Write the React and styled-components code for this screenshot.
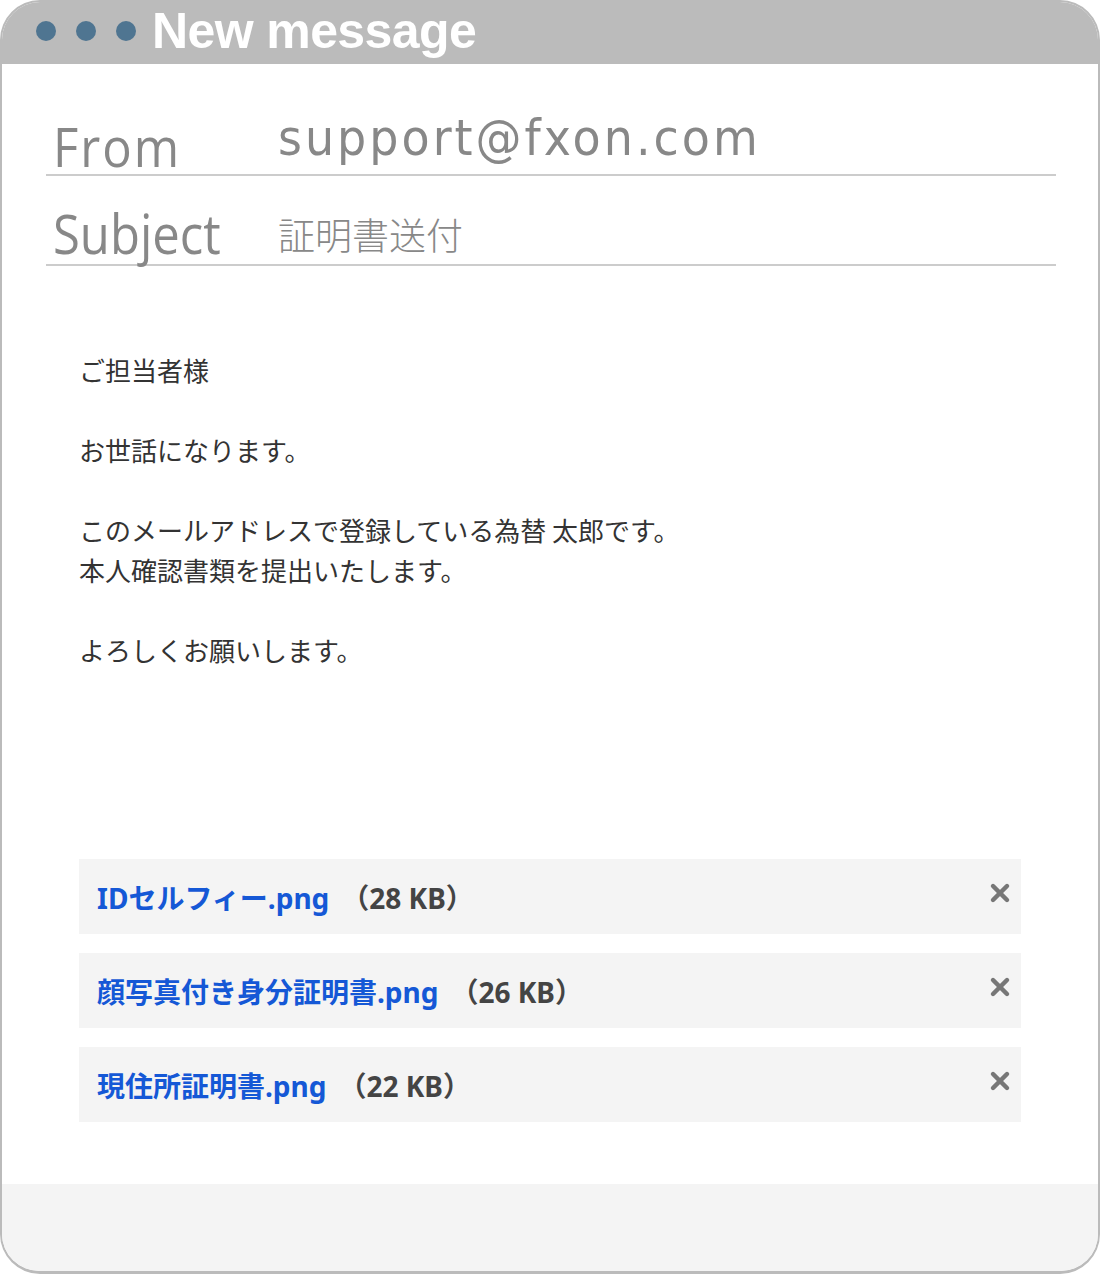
import React from "react";
import styled, { createGlobalStyle } from "styled-components";
import { X } from "lucide-react";

//global
const GlobalStyle = createGlobalStyle`
  html, body {
    margin: 0;
    padding: 0;
    background: #ffffff;
  }
  * {
    box-sizing: border-box;
  }
`;

//css section
const Window = styled.div`
  width: 1100px;
  height: 1274px;
  border: 2px solid #bbbbbb;
  border-bottom-width: 3px;
  border-radius: 40px;
  overflow: hidden;
  display: flex;
  flex-direction: column;
  background: #ffffff;
  font-family: "Noto Sans CJK JP", sans-serif;
`;

const TitleBar = styled.div`
  height: 62px;
  flex-shrink: 0;
  background: #bbbbbb;
  display: flex;
  align-items: center;
  padding: 0 0 4px 34px;
  gap: 20px;
`;

const Dot = styled.span`
  width: 20px;
  height: 20px;
  border-radius: 50%;
  background: #4f7591;
`;

const Title = styled.h1`
  margin: 0 0 0 -4px;
  font-family: "Liberation Sans", Arial, sans-serif;
  font-weight: 700;
  font-size: 50px;
  line-height: 50px;
  letter-spacing: -0.6px;
  color: #ffffff;
`;

const Header = styled.div`
  padding: 0 42px 0 44px;
`;

const FieldRow = styled.div`
  display: flex;
  align-items: flex-end;
  height: ${(p) => p.$height}px;
  border-bottom: 2px solid #cccccc;
`;

const Label = styled.div`
  width: 232px;
  flex-shrink: 0;
  padding-left: 7px;
  padding-bottom: ${(p) => p.$pb}px;
  font-family: "Open Sans", sans-serif;
  font-size: 49px;
  line-height: 49px;
  letter-spacing: ${(p) => p.$ls || 0}px;
  color: #888888;
  transform: scaleY(1.13);
  transform-origin: left bottom;
`;

const EmailValue = styled.div`
  padding-bottom: 10px;
  font-family: "DejaVu Sans", sans-serif;
  font-size: 46px;
  line-height: 46px;
  letter-spacing: 3px;
  color: #888888;
  transform: scaleY(1.1);
  transform-origin: left bottom;
`;

const SubjectValue = styled.div`
  padding-bottom: 10px;
  font-family: "Noto Sans CJK JP", sans-serif;
  font-size: 37px;
  line-height: 40px;
  color: #888888;
  font-weight: 300;
`;

const Body = styled.div`
  padding: 84px 0 0 77px;
  color: #333333;
  font-size: 26px;
  line-height: 40px;

  p {
    margin: 0 0 40px;
  }
`;

const Attachments = styled.div`
  margin: 149px 77px 0 77px;
  display: flex;
  flex-direction: column;
  gap: 19px;
`;

const Attachment = styled.div`
  height: 75px;
  background: #f4f4f4;
  display: flex;
  align-items: center;
  padding: 0 7px 0 18px;
`;

const FileName = styled.span`
  font-family: "Noto Sans", "Noto Sans CJK JP", sans-serif;
  font-weight: 700;
  font-size: 28px;
  color: #1558d6;
`;

const FileSize = styled.span`
  margin-left: 12px;
  font-family: "Noto Sans", "Noto Sans CJK JP", sans-serif;
  font-weight: 700;
  font-size: 28px;
  color: #444444;
`;

const Remove = styled.button`
  margin-left: auto;
  margin-top: -8px;
  width: 28px;
  height: 28px;
  padding: 0;
  border: none;
  background: none;
  color: #777777;
  display: flex;
  align-items: center;
  justify-content: center;
`;

const Footer = styled.div`
  margin-top: auto;
  height: 87px;
  flex-shrink: 0;
  background: #f4f4f4;
`;

const files = [
  { name: "IDセルフィー.png", size: "（28 KB）" },
  { name: "顔写真付き身分証明書.png", size: "（26 KB）" },
  { name: "現住所証明書.png", size: "（22 KB）" },
];

function App() {
  return (
    <>
      <GlobalStyle />
      <Window>
        <TitleBar>
          <Dot />
          <Dot />
          <Dot />
          <Title>New message</Title>
        </TitleBar>

        <Header>
          <FieldRow $height={112}>
            <Label $pb={-2} $ls={2}>From</Label>
            <EmailValue>support@fxon.com</EmailValue>
          </FieldRow>
          <FieldRow $height={90}>
            <Label $pb={3}>Subject</Label>
            <SubjectValue>証明書送付</SubjectValue>
          </FieldRow>
        </Header>

        <Body>
          <p>ご担当者様</p>
          <p>お世話になります。</p>
          <p>
            このメールアドレスで登録している為替 太郎です。
            <br />
            本人確認書類を提出いたします。
          </p>
          <p>よろしくお願いします。</p>
        </Body>

        <Attachments>
          {files.map((f) => (
            <Attachment key={f.name}>
              <FileName>{f.name}</FileName>
              <FileSize>{f.size}</FileSize>
              <Remove aria-label="remove">
                <X size={28} strokeWidth={3.8} />
              </Remove>
            </Attachment>
          ))}
        </Attachments>

        <Footer />
      </Window>
    </>
  );
}

export default App;
